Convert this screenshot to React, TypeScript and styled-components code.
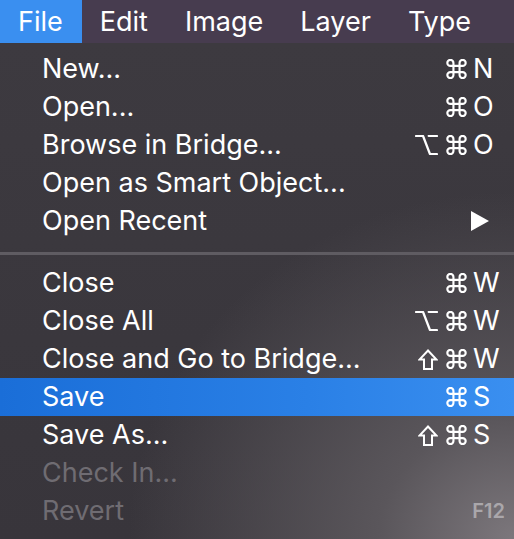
import styled, { createGlobalStyle } from "styled-components";
import { Command, Option } from "lucide-react";

const GlobalStyle = createGlobalStyle`
  html, body {
    margin: 0;
    padding: 0;
    background: #38353b;
  }
  body {
    font-family: "Inter", "DejaVu Sans", sans-serif;
    -webkit-font-smoothing: antialiased;
  }
`;

type Mod = "cmd" | "opt" | "shift";

type Entry =
  | {
      kind: "item";
      label: string;
      mods?: Mod[];
      keyChar?: string;
      submenu?: boolean;
      disabled?: boolean;
      active?: boolean;
      fkey?: string;
    }
  | { kind: "sep" };

const entries: Entry[] = [
  { kind: "item", label: "New...", mods: ["cmd"], keyChar: "N" },
  { kind: "item", label: "Open...", mods: ["cmd"], keyChar: "O" },
  { kind: "item", label: "Browse in Bridge...", mods: ["opt", "cmd"], keyChar: "O" },
  { kind: "item", label: "Open as Smart Object..." },
  { kind: "item", label: "Open Recent", submenu: true },
  { kind: "sep" },
  { kind: "item", label: "Close", mods: ["cmd"], keyChar: "W" },
  { kind: "item", label: "Close All", mods: ["opt", "cmd"], keyChar: "W" },
  { kind: "item", label: "Close and Go to Bridge...", mods: ["shift", "cmd"], keyChar: "W" },
  { kind: "item", label: "Save", mods: ["cmd"], keyChar: "S", active: true },
  { kind: "item", label: "Save As...", mods: ["shift", "cmd"], keyChar: "S" },
  { kind: "item", label: "Check In...", disabled: true },
  { kind: "item", label: "Revert", disabled: true, fkey: "F12" },
];

const menus = ["File", "Edit", "Image", "Layer", "Type"];

// modifier key glyphs, drawn to match the mac menu symbols
const ModIcon = ({ mod }: { mod: Mod }) => {
  if (mod === "cmd") {
    return <Command viewBox="2.2 2.2 19.6 19.6" width={21} height={20} strokeWidth={2.1} />;
  }
  if (mod === "opt") {
    return <Option viewBox="2 2 20 20" width={23} height={20} strokeWidth={2.1} preserveAspectRatio="none" />;
  }
  return (
    <svg width={20} height={21} viewBox="0 0 20 21" fill="none" stroke="currentColor" strokeWidth={2}>
      <polygon points="10,1.5 18.5,10.5 14,10.5 14,20 6,20 6,10.5 1.5,10.5" strokeLinejoin="miter" />
    </svg>
  );
};

export default function App() {
  return (
    <Screen>
      <GlobalStyle />
      <MenuBar>
        {menus.map((m, i) => (
          <MenuTitle key={m} $open={i === 0}>
            {m}
          </MenuTitle>
        ))}
      </MenuBar>

      <Dropdown>
        {entries.map((e, i) =>
          e.kind === "sep" ? (
            <Separator key={i} />
          ) : (
            <Item key={i} $active={e.active} $disabled={e.disabled}>
              <Label>{e.label}</Label>
              {e.keyChar && (
                <Shortcut>
                  <Mods>
                    {e.mods?.map((m, j) => (
                      <ModIcon key={j} mod={m} />
                    ))}
                  </Mods>
                  <KeyChar>{e.keyChar}</KeyChar>
                </Shortcut>
              )}
              {e.submenu && (
                <Arrow viewBox="0 0 18 20">
                  <polygon points="0,0 18,10 0,20" fill="#ffffff" />
                </Arrow>
              )}
              {e.fkey && <FKey>{e.fkey}</FKey>}
            </Item>
          )
        )}
      </Dropdown>
    </Screen>
  );
}

const Screen = styled.div`
  width: 514px;
  height: 539px;
  overflow: hidden;
  display: flex;
  flex-direction: column;
`;

const MenuBar = styled.div`
  height: 43px;
  display: flex;
  align-items: stretch;
  background: #473c4f;
`;

const MenuTitle = styled.div<{ $open?: boolean }>`
  display: flex;
  align-items: center;
  padding: 0 19px 0 18px;
  font-size: 27px;
  color: #ffffff;
  background: ${(p) => (p.$open ? "#3a8ff0" : "transparent")};
`;

const Dropdown = styled.div`
  flex: 1;
  display: flex;
  flex-direction: column;
  padding-top: 7px;
  background:
    radial-gradient(ellipse 75% 70% at 100% 100%, #7c777c 0%, #5a565b 35%, rgba(58, 55, 61, 0) 100%),
    linear-gradient(180deg, #3d3a40 0%, #38353b 100%);
`;

const Item = styled.div<{ $active?: boolean; $disabled?: boolean }>`
  height: 38px;
  display: flex;
  align-items: center;
  padding: 0 14px 0 42px;
  font-size: 27px;
  line-height: 38px;
  color: ${(p) => (p.$disabled ? "#6f6c72" : "#ffffff")};
  background: ${(p) =>
    p.$active ? "linear-gradient(90deg, #1a6ed8 0%, #2a80e6 60%, #3a8ff0 100%)" : "transparent"};
`;

const Label = styled.span`
  flex: 1;
  white-space: nowrap;
`;

const Shortcut = styled.span`
  display: flex;
  align-items: center;
`;

const Mods = styled.span`
  display: flex;
  align-items: center;
  gap: 8px;
  margin-right: 6px;
`;

const KeyChar = styled.span`
  width: 27px;
`;

const Arrow = styled.svg`
  width: 18px;
  height: 20px;
  margin-right: 11px;
`;

const FKey = styled.span`
  font-size: 20px;
  font-weight: 600;
  color: #aaa7ab;
  margin-right: -5px;
`;

const Separator = styled.div`
  height: 3px;
  margin: 12px 0 9px;
  background: #5f5c62;
`;
